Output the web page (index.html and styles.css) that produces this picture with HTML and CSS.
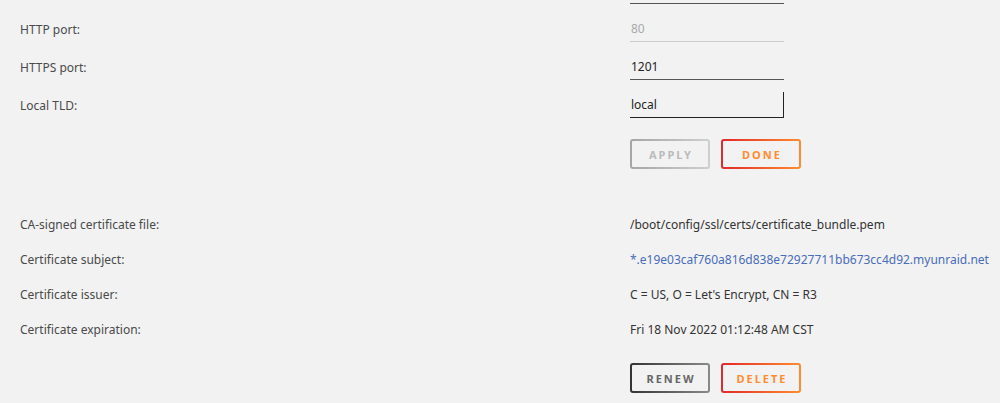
FILE: index.html
```html
<!DOCTYPE html>
<html lang="en">
<head>
    <meta charset="UTF-8">
    <meta name="viewport" content="width=device-width, initial-scale=1.0">
    <title>Management Access</title>
    <link rel="stylesheet" href="styles.css">
</head>
<body>
    <form class="settings" id="ports-form">
        <div class="row">
            <span class="label"></span>
            <input class="field" type="text" value="">
        </div>
        <div class="row">
            <span class="label">HTTP port:</span>
            <input class="field disabled" type="text" value="80" disabled>
        </div>
        <div class="row">
            <span class="label">HTTPS port:</span>
            <input class="field" type="text" value="1201">
        </div>
        <div class="row">
            <span class="label">Local TLD:</span>
            <input class="field focused" type="text" value="local">
        </div>
        <div class="row buttons">
            <span class="label"></span>
            <div class="btn-group">
                <button type="button" class="btn btn-off" disabled>Apply</button>
                <button type="button" class="btn btn-hot">Done</button>
            </div>
        </div>
    </form>

    <div class="settings cert">
        <div class="row">
            <span class="label">CA-signed certificate file:</span>
            <span class="value">/boot/config/ssl/certs/certificate_bundle.pem</span>
        </div>
        <div class="row">
            <span class="label">Certificate subject:</span>
            <a class="value link" href="#">*.e19e03caf760a816d838e72927711bb673cc4d92.myunraid.net</a>
        </div>
        <div class="row">
            <span class="label">Certificate issuer:</span>
            <span class="value">C = US, O = Let's Encrypt, CN = R3</span>
        </div>
        <div class="row">
            <span class="label">Certificate expiration:</span>
            <span class="value">Fri 18 Nov 2022 01:12:48 AM CST</span>
        </div>
        <div class="row buttons">
            <span class="label"></span>
            <div class="btn-group">
                <button type="button" class="btn btn-dark">Renew</button>
                <button type="button" class="btn btn-hot">Delete</button>
            </div>
        </div>
    </div>
</body>
</html>
```

FILE: styles.css
```css
/* base */
html, body {
    background-color: #f2f2f2;
}
body {
    font-family: "Noto Sans", "Open Sans", Arial, sans-serif;
    font-size: 12px;
    color: #4a4a4a;
    margin: 0;
    padding: 0 20px;
    overflow: hidden;
}
.settings .row {
    display: grid;
    grid-template-columns: 610px 1fr;
    align-items: center;
}
/* port fields */
#ports-form {
    margin-top: -22px;
    display: flex;
    flex-direction: column;
    gap: 12px;
}
.field {
    box-sizing: border-box;
    width: 154px;
    height: 26px;
    padding: 0 1px;
    border: none;
    border-bottom: 1px solid #555;
    background: transparent;
    font-family: inherit;
    font-size: 12px;
    color: #222;
    outline: none;
}
.field.disabled {
    color: #aaa;
    border-bottom-color: #ccc;
}
.field.focused {
    border-right: 1px solid #222;
    border-bottom-color: #222;
}
#ports-form .buttons {
    margin-top: 9px;
}
/* buttons with gradient border */
.btn-group {
    display: flex;
    gap: 11px;
}
.btn {
    box-sizing: border-box;
    width: 80px;
    height: 30px;
    border: 2px solid transparent;
    border-radius: 3px;
    font-family: inherit;
    font-size: 11px;
    font-weight: bold;
    letter-spacing: 2px;
    text-transform: uppercase;
    padding: 0 0 0 2px;
    cursor: pointer;
}
.btn-off {
    color: #bbb;
    background: linear-gradient(#f2f2f2, #f2f2f2) padding-box,
                linear-gradient(90deg, #a5a5a5, #cfcfcf) border-box;
    cursor: default;
}
.btn-hot {
    color: #ff8c2f;
    background: linear-gradient(#f2f2f2, #f2f2f2) padding-box,
                linear-gradient(90deg, #e22828, #ff8c2f) border-box;
}
.btn-dark {
    color: #666;
    background: linear-gradient(#f2f2f2, #f2f2f2) padding-box,
                linear-gradient(90deg, #333, #8a8a8a) border-box;
}
/* certificate info */
.cert {
    margin-top: 38px;
}
.cert .row {
    height: 35px;
}
.cert .buttons {
    height: auto;
    margin-top: 16px;
}
.value {
    color: #333;
}
.link {
    color: #486dba;
    text-decoration: none;
}
```
